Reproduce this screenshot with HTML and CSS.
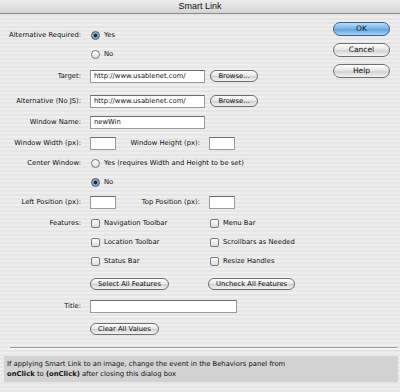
FILE: index.html
```html
<!DOCTYPE html>
<html>
<head>
    <title>Smart Link</title>
    <meta charset="UTF-8">
    <link rel="stylesheet" href="styles.css">
</head>
<body>
    <div class="titlebar">Smart Link</div>

    <div class="main">
        <div class="form">
            <div class="row">
                <span class="label">Alternative Required:</span>
                <span class="radio checked"></span><span>Yes</span>
            </div>
            <div class="row mt1">
                <span class="label"></span>
                <span class="radio"></span><span>No</span>
            </div>
            <div class="row mt4">
                <span class="label">Target:</span>
                <span class="field wide">http://www.usablenet.com/</span>
                <button class="btn browse">Browse...</button>
            </div>
            <div class="row mt7">
                <span class="label">Alternative (No JS):</span>
                <span class="field wide">http://www.usablenet.com/</span>
                <button class="btn browse">Browse...</button>
            </div>
            <div class="row mt3">
                <span class="label">Window Name:</span>
                <span class="field wide">newWin</span>
            </div>
            <div class="row mt3">
                <span class="label">Window Width (px):</span>
                <span class="col">
                    <span class="field small"></span>
                    <span class="label2">Window Height (px):</span>
                </span>
                <span class="field small"></span>
            </div>
            <div class="row mt2">
                <span class="label">Center Window:</span>
                <span class="radio"></span><span>Yes (requires Width and Height to be set)</span>
            </div>
            <div class="row mt1">
                <span class="label"></span>
                <span class="radio checked"></span><span>No</span>
            </div>
            <div class="row mt2">
                <span class="label">Left Position (px):</span>
                <span class="col">
                    <span class="field small"></span>
                    <span class="label2">Top Position (px):</span>
                </span>
                <span class="field small"></span>
            </div>
            <div class="row mt3">
                <span class="label">Features:</span>
                <span class="col"><span class="check"></span><span>Navigation Toolbar</span></span>
                <span class="check"></span><span>Menu Bar</span>
            </div>
            <div class="row mt1">
                <span class="label"></span>
                <span class="col"><span class="check"></span><span>Location Toolbar</span></span>
                <span class="check"></span><span>Scrollbars as Needed</span>
            </div>
            <div class="row mt1">
                <span class="label"></span>
                <span class="col"><span class="check"></span><span>Status Bar</span></span>
                <span class="check"></span><span>Resize Handles</span>
            </div>
            <div class="row mt5">
                <span class="label"></span>
                <span class="col"><button class="btn">Select All Features</button></span>
                <button class="btn shift">Uncheck All Features</button>
            </div>
            <div class="row mt4">
                <span class="label">Title:</span>
                <span class="field title"></span>
            </div>
            <div class="row mt5">
                <span class="label"></span>
                <button class="btn">Clear All Values</button>
            </div>
        </div>

        <div class="side">
            <button class="btn default">OK</button>
            <button class="btn">Cancel</button>
            <button class="btn">Help</button>
        </div>
    </div>

    <div class="separator"></div>

    <div class="note">
        If applying Smart Link to an image, change the event in the Behaviors panel from<br>
        <b>onClick</b> to <b>(onClick)</b> after closing this dialog box
    </div>
</body>
</html>
```

FILE: styles.css
```css
body {
    margin: 0;
    width: 400px;
    height: 392px;
    overflow: hidden;
    font-family: 'DejaVu Sans', Verdana, sans-serif;
    font-size: 6.8px;
    color: #111;
    background: repeating-linear-gradient(#eeeeee 0 2px, #e6e6e6 2px 4px);
}
.titlebar {
    height: 13px;
    line-height: 13px;
    text-align: center;
    font-family: 'Liberation Sans', Arial, sans-serif;
    font-size: 9px;
    color: #111;
    border-bottom: 1px solid #8a8a8a;
    background: linear-gradient(#eeeeee, #d4d4d4);
}
.main {
    display: flex;
}
.form {
    padding-top: 12px;
    flex: 1;
}
.row {
    display: flex;
    align-items: center;
    height: 18px;
    white-space: nowrap;
}
.mt1 { margin-top: 1px; }
.mt2 { margin-top: 2px; }
.mt3 { margin-top: 3px; }
.mt4 { margin-top: 4px; }
.mt5 { margin-top: 5px; }
.mt7 { margin-top: 7px; }
.label {
    flex: none;
    width: 81px;
    margin-right: 9px;
    text-align: right;
}
.col {
    flex: none;
    width: 119px;
    display: flex;
    align-items: center;
}
.label2 {
    flex: 1;
    text-align: right;
    padding-right: 9px;
}
.field {
    box-sizing: border-box;
    height: 13px;
    line-height: 11px;
    padding: 0 3px;
    background: #fff;
    border: 1px solid #9a9a9a;
    border-top-color: #6e6e6e;
}
.field.wide { width: 115px; }
.field.small { width: 26px; }
.field.title { width: 147px; }
.radio {
    box-sizing: border-box;
    width: 9px;
    height: 9px;
    margin: 0 4px 0 1px;
    border-radius: 50%;
    border: 1px solid #7a7a7a;
    background: linear-gradient(#ffffff, #dcdcdc);
}
.radio.checked {
    border-color: #4c5c6e;
    background: radial-gradient(circle, #1e2a36 0 1.6px, #86a9cc 2.2px);
}
.check {
    box-sizing: border-box;
    width: 9px;
    height: 9px;
    margin: 0 4px 0 1px;
    border-radius: 2px;
    border: 1px solid #7a7a7a;
    background: linear-gradient(#ffffff, #dcdcdc);
}
.btn {
    box-sizing: border-box;
    height: 12px;
    padding: 0 7px;
    font-family: inherit;
    font-size: 6.8px;
    line-height: 10px;
    color: #111;
    border: 1px solid #6f6f6f;
    border-radius: 7px;
    background: linear-gradient(#ffffff, #e4e4e4 50%, #d2d2d2 55%, #f4f4f4);
}
.btn.browse {
    width: 48px;
    margin-left: 5px;
    padding: 0;
}
.btn.shift {
    margin-left: -1px;
}
.side {
    display: flex;
    flex-direction: column;
    gap: 7px;
    width: 57px;
    margin: 8px 10px 0 0;
}
.side .btn {
    height: 14px;
    line-height: 12px;
    font-size: 7.5px;
}
.btn.default {
    border-color: #3f6186;
    background: linear-gradient(#b8dcf8, #74b4ea 50%, #62a6e2 55%, #a6d4f8);
}
.separator {
    margin: 9px 3px 0 10px;
    height: 1px;
    background: #9a9a9a;
    border-bottom: 1px solid #fafafa;
}
.note {
    margin: 7px 2px 0 4px;
    height: 26px;
    box-sizing: border-box;
    padding: 4px 3px 0;
    line-height: 9.5px;
    background: #d2d2d2;
}
```
